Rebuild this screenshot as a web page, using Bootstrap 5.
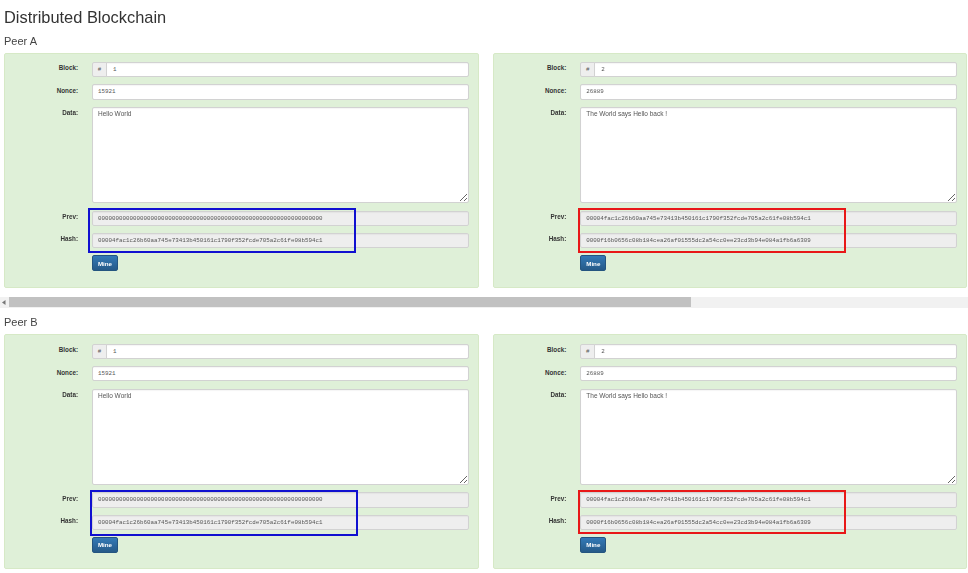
<!DOCTYPE html>
<html lang="en">
<head>
  <meta charset="UTF-8" />
  <meta name="viewport" content="width=device-width, initial-scale=1.0"/>
  <title>Distributed Blockchain</title>
  <link href="https://cdn.jsdelivr.net/npm/bootstrap@5.3.3/dist/css/bootstrap.min.css" rel="stylesheet">
  <style>
    html, body { overflow: hidden; }
    body {
      height: 573px;
      background: #fff;
      color: #333;
      font-family: "Liberation Sans", Arial, sans-serif;
      filter: blur(.45px);
    }
    .page-title { font-size: 16.4px; line-height: 18px; font-weight: 400; margin: 0; padding: 8px 0 0 4px; }
    .peer-title { font-size: 11px; line-height: 14px; font-weight: 400; color: #444; margin: 0; padding-left: 4px; }
    .peer-a { padding-top: 7.5px; height: 26.5px; }
    .peer-b { padding-top: 7px; height: 26px; }
    .peer-row { padding: 0 1.5px 0 4px; gap: 14.5px; }
    .block-card {
      position: relative;
      flex: 0 0 474.5px;
      height: 235.2px;
      padding: 8.5px 9.5px 0 0;
      background: #dff0d8;
      border: 1px solid #d6e9c6;
      border-radius: 2px;
      gap: 7.2px;
    }
    .block-card > div { margin: 0 -1px; }
    .block-card.right-card { flex-basis: 473.5px; }
    .field-label {
      flex: 0 0 74px;
      margin: 0 14px 0 0;
      padding-top: 2.4px;
      text-align: right;
      font-size: 6.3px;
      line-height: 8px;
      font-weight: 700;
      color: #333;
    }
    .right-card .field-label { flex-basis: 73.3px; }
    .block-card .form-control, .block-card .input-group-text {
      height: 15.2px;
      min-height: 0;
      padding: 0 5px;
      font-size: 5.85px;
      line-height: 13px;
      border-radius: 2px;
      border-color: #d2d2d2;
      color: #555;
    }
    .block-card .form-control { font-family: "Liberation Mono", "Courier New", monospace; box-shadow: inset 0 1px 1px rgba(0,0,0,.04); }
    .block-card .input-group .form-control { padding-left: 6px; }
    .block-card .form-control[readonly] { background: #eee; }
    .block-card .input-group-text { background: #eee; font-family: "Liberation Mono", monospace; width: 15px; justify-content: center; padding: 0; }
    .block-card textarea.form-control {
      height: 96.6px;
      padding-top: 2px;
      font-family: "Liberation Sans", Arial, sans-serif;
      font-size: 6.5px;
      line-height: 8px;
    }
    .mine-btn {
      width: 26px;
      height: 15.6px;
      padding: 0;
      font-size: 6.2px;
      line-height: 13px;
      font-weight: 700;
      color: #fff;
      background: linear-gradient(#337ab7, #265a88);
      border: 1px solid #245580;
      border-radius: 2px;
    }
    .hscroll { height: 11px; margin-top: 9.6px; background: #f1f1f1; }
    .hscroll-arrow { flex: 0 0 9px; padding: 2.5px 0 0 1.5px; }
    .hscroll-thumb { flex: 0 0 681.7px; background: #c1c1c1; height: 10px; }
    .hl-box { position: absolute; border: 2px solid; pointer-events: none; }
    .hl-blue { border-color: #1010d0; }
    .hl-red { border-color: #e81818; }
    .hl-a1 { left: 83px; top: 154px; width: 267.7px; height: 45.4px; }
    .hl-a2 { left: 84.3px; top: 154.5px; width: 268px; height: 45.3px; }
    .hl-b1 { left: 84.7px; top: 154.7px; width: 268.3px; height: 45.7px; }
    .hl-b2 { left: 84.3px; top: 154.7px; width: 268px; height: 44.5px; }
  </style>
</head>
<body>
  <h1 class="page-title">Distributed Blockchain</h1>

  <h2 class="peer-title peer-a">Peer A</h2>
  <div class="d-flex peer-row">
    <form class="block-card d-flex flex-column">
      <div class="d-flex"><label class="field-label">Block:</label><div class="input-group flex-fill"><span class="input-group-text">#</span><input class="form-control" value="1"></div></div>
      <div class="d-flex"><label class="field-label">Nonce:</label><input class="form-control" value="15921"></div>
      <div class="d-flex"><label class="field-label">Data:</label><textarea class="form-control">Hello World</textarea></div>
      <div class="d-flex"><label class="field-label">Prev:</label><input class="form-control" readonly value="0000000000000000000000000000000000000000000000000000000000000000"></div>
      <div class="d-flex"><label class="field-label">Hash:</label><input class="form-control" readonly value="00004fac1c26b60aa745e73413b450161c1790f352fcde705a2c61fe08b594c1"></div>
      <div class="d-flex"><span class="field-label"></span><button type="button" class="btn mine-btn">Mine</button></div>
      <span class="hl-box hl-blue hl-a1"></span>
    </form>
    <form class="block-card right-card d-flex flex-column">
      <div class="d-flex"><label class="field-label">Block:</label><div class="input-group flex-fill"><span class="input-group-text">#</span><input class="form-control" value="2"></div></div>
      <div class="d-flex"><label class="field-label">Nonce:</label><input class="form-control" value="26889"></div>
      <div class="d-flex"><label class="field-label">Data:</label><textarea class="form-control">The World says Hello back !</textarea></div>
      <div class="d-flex"><label class="field-label">Prev:</label><input class="form-control" readonly value="00004fac1c26b60aa745e73413b450161c1790f352fcde705a2c61fe08b594c1"></div>
      <div class="d-flex"><label class="field-label">Hash:</label><input class="form-control" readonly value="0000f16b0656c08b184cea26af01555dc2a54cc0ee23cd3b94e084a1fb6a6309"></div>
      <div class="d-flex"><span class="field-label"></span><button type="button" class="btn mine-btn">Mine</button></div>
      <span class="hl-box hl-red hl-a2"></span>
    </form>
  </div>

  <div class="hscroll d-flex">
    <div class="hscroll-arrow"><svg class="d-block" width="4" height="5" viewBox="0 0 4 5"><path d="M3.5 0v5L0 2.500z" fill="#777"/></svg></div>
    <div class="hscroll-thumb"></div>
  </div>

  <h2 class="peer-title peer-b">Peer B</h2>
  <div class="d-flex peer-row">
    <form class="block-card d-flex flex-column">
      <div class="d-flex"><label class="field-label">Block:</label><div class="input-group flex-fill"><span class="input-group-text">#</span><input class="form-control" value="1"></div></div>
      <div class="d-flex"><label class="field-label">Nonce:</label><input class="form-control" value="15921"></div>
      <div class="d-flex"><label class="field-label">Data:</label><textarea class="form-control">Hello World</textarea></div>
      <div class="d-flex"><label class="field-label">Prev:</label><input class="form-control" readonly value="0000000000000000000000000000000000000000000000000000000000000000"></div>
      <div class="d-flex"><label class="field-label">Hash:</label><input class="form-control" readonly value="00004fac1c26b60aa745e73413b450161c1790f352fcde705a2c61fe08b594c1"></div>
      <div class="d-flex"><span class="field-label"></span><button type="button" class="btn mine-btn">Mine</button></div>
      <span class="hl-box hl-blue hl-b1"></span>
    </form>
    <form class="block-card right-card d-flex flex-column">
      <div class="d-flex"><label class="field-label">Block:</label><div class="input-group flex-fill"><span class="input-group-text">#</span><input class="form-control" value="2"></div></div>
      <div class="d-flex"><label class="field-label">Nonce:</label><input class="form-control" value="26889"></div>
      <div class="d-flex"><label class="field-label">Data:</label><textarea class="form-control">The World says Hello back !</textarea></div>
      <div class="d-flex"><label class="field-label">Prev:</label><input class="form-control" readonly value="00004fac1c26b60aa745e73413b450161c1790f352fcde705a2c61fe08b594c1"></div>
      <div class="d-flex"><label class="field-label">Hash:</label><input class="form-control" readonly value="0000f16b0656c08b184cea26af01555dc2a54cc0ee23cd3b94e084a1fb6a6309"></div>
      <div class="d-flex"><span class="field-label"></span><button type="button" class="btn mine-btn">Mine</button></div>
      <span class="hl-box hl-red hl-b2"></span>
    </form>
  </div>

  <script src="https://cdn.jsdelivr.net/npm/bootstrap@5.3.3/dist/js/bootstrap.bundle.min.js"></script>
</body>
</html>
